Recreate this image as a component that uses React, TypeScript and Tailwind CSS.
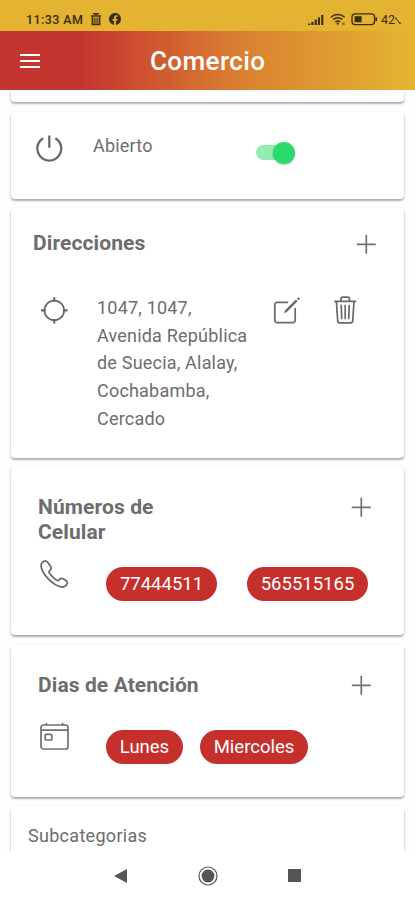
import type { ReactNode } from "react";

const addressLines = [
  "1047, 1047,",
  "Avenida República",
  "de Suecia, Alalay,",
  "Cochabamba,",
  "Cercado",
];

function Card({ className, children }: { className: string; children?: ReactNode }) {
  return (
    <section
      className={`mx-[11px] shrink-0 bg-white shadow-[0_2px_2px_rgba(0,0,0,0.24),0_1px_3px_rgba(0,0,0,0.16)] ${className}`}
    >
      {children}
    </section>
  );
}

function PlusIcon() {
  return (
    <button type="button" aria-label="Agregar" className="size-5 shrink-0">
      <svg viewBox="0 0 20 20" className="size-5" fill="none" stroke="#707070" strokeWidth="1.7">
        <path d="M10.3 .8v19M.8 10.3h19" />
      </svg>
    </button>
  );
}

function Chip({ label, className }: { label: string; className: string }) {
  return (
    <span
      className={`flex shrink-0 items-center justify-center rounded-full bg-[#c5302d] text-[18.5px] leading-none text-white ${className}`}
    >
      {label}
    </span>
  );
}

function StatusBar() {
  return (
    <div className="flex h-[31px] shrink-0 items-start bg-[#e4b331] pt-[13px] pl-[26px] text-[#3b2c0b]">
      <span className="w-[58px] text-[12.5px] leading-[14px] font-medium tracking-[0.4px] whitespace-nowrap">
        11:33 AM
      </span>
      <svg viewBox="0 0 12 14" className="ml-[6px] h-[13px] w-3" fill="none" stroke="currentColor">
        <path d="M.5 3.2h11M4 2V1h4v1" strokeWidth="1.8" />
        <path d="M2.2 4v8.2h7.6V4" strokeWidth="1.8" />
        <path d="M4.8 5v6M7.2 5v6" strokeWidth="1.3" />
      </svg>
      <svg viewBox="0 0 12 12" className="ml-[7px] size-3" fill="currentColor">
        <path d="M12 6a6 6 0 1 0-7 5.9V7.8H3.5V6H5V4.6c0-1.5.9-2.4 2.3-2.4l1.3.1v1.5h-.8c-.7 0-.9.4-.9.9V6h1.6l-.2 1.8H6.9v4.1A6 6 0 0 0 12 6z" />
      </svg>
      <svg viewBox="0 0 17 12" className="mt-[1px] ml-[187px] h-3 w-[17px]" fill="currentColor">
        <path d="M0 9.5h2.2V11H0zM3.3 8h2.2v3H3.3zM6.6 5.8h2.2V11H6.6zM9.9 3.4H12V11H9.9zM13.2 1h2.1v10h-2.1z" />
      </svg>
      <svg viewBox="0 0 17 13" className="ml-[5px] h-[13px] w-[17px]" fill="none" stroke="currentColor">
        <path d="M1 4.2a10 10 0 0 1 13.6 0M3.2 6.5a7 7 0 0 1 9.2 0M5.4 8.8a4 4 0 0 1 4.8 0" strokeWidth="1.5" />
        <circle cx="7.8" cy="10.6" r=".7" fill="currentColor" />
        <path d="M12.5 9.5l2 2.5m0-2.5l-2 2.5" strokeWidth=".7" />
      </svg>
      <svg viewBox="0 0 27 13" className="ml-1 h-[13px] w-[27px]" fill="none" stroke="currentColor">
        <rect x="1" y=".8" width="22.5" height="10.8" rx="3" strokeWidth="1.3" />
        <rect x="3.6" y="3.2" width="7" height="6" fill="currentColor" stroke="none" />
        <path d="M25.2 4.2v4" strokeWidth="1.6" />
      </svg>
      <span className="ml-[3px] text-[12.5px] leading-[14px]">42</span>
      <svg viewBox="0 0 6 9" className="mt-[3px] h-[9px] w-[6px]" fill="none" stroke="currentColor" strokeWidth="1">
        <path d="M.8 2.3l4.4 5.4M.8 1.5v1.8M5 6v2" />
      </svg>
    </div>
  );
}

export default function App() {
  return (
    <div className="flex h-[900px] w-[415px] flex-col overflow-hidden bg-white font-[Roboto,sans-serif] text-[#6d6d6d]">
      <StatusBar />

      <header className="flex h-[59px] shrink-0 items-center bg-[linear-gradient(90deg,#c5352f_0%,#c5352f_20%,#d97d31_56%,#e4b331_98%)] pl-5 text-white">
        <svg viewBox="0 0 20 14" className="h-[14px] w-5" fill="none" stroke="currentColor" strokeWidth="2">
          <path d="M0 1h20M0 7h20M0 13h20" />
        </svg>
        <h1 className="ml-[110px] text-[26px] leading-[30px] font-medium tracking-[0.4px]">Comercio</h1>
      </header>

      <main className="flex min-h-0 flex-1 flex-col overflow-hidden bg-[#fefefe]">
        <Card className="h-[12px] rounded-b-[4px]" />

        <Card className="mt-[10px] flex h-[87px] rounded-[4px] pl-[25px]">
          <svg
            viewBox="0 0 27 27"
            className="mt-[23px] size-[27px] shrink-0"
            fill="none"
            stroke="#656565"
            strokeWidth="2.2"
            strokeLinecap="butt"
          >
            <path d="M13.3 .4v12.4M7.2 3.2A12 12 0 1 0 19.4 3.2" />
          </svg>
          <p className="mt-[22px] ml-[30px] w-[163px] text-[18px] leading-6 tracking-[0.2px]">Abierto</p>
          <button type="button" role="switch" aria-checked="true" className="relative mt-[30px] h-[22px] w-[39px]">
            <span className="absolute top-[3px] left-0 h-[15px] w-[36px] rounded-full bg-[#91edb2]" />
            <span className="absolute top-0 right-0 size-[22px] rounded-full bg-[#2adb6b] shadow-[0_1px_2px_rgba(0,0,0,0.25)]" />
          </button>
        </Card>

        <Card className="mt-[9px] h-[250px] rounded-[4px]">
          <div className="flex items-center justify-between pt-[23px] pr-[28px] pl-[22px]">
            <h2 className="text-[21px] leading-[25px] font-bold tracking-[0.1px]">Direcciones</h2>
            <span className="mt-[1px] flex">
              <PlusIcon />
            </span>
          </div>
          <div className="mt-[38px] flex items-start pl-[29px]">
            <svg viewBox="0 0 28 28" className="mt-[2px] size-7 shrink-0" fill="none" stroke="#686868">
              <circle cx="14.3" cy="14.4" r="9.8" strokeWidth="1.7" />
              <path d="M14.3 1.2v4.6M14.3 23v4.6M1 14.4h4.7M22.9 14.4h4.7" strokeWidth="2.1" />
            </svg>
            <p className="ml-[29px] w-[176px] text-[18px] leading-[27.7px] tracking-[0.2px]">
              {addressLines.map((line) => (
                <span key={line} className="block whitespace-nowrap">
                  {line}
                </span>
              ))}
            </p>
            <svg viewBox="0 0 28 28" className="mt-[3px] h-7 w-7 shrink-0" fill="none" stroke="#686868">
              <path
                d="M15.2 5.3H4.2A2.4 2.4 0 0 0 1.8 7.7v15.6a2.4 2.4 0 0 0 2.4 2.4h15.6a2.4 2.4 0 0 0 2.4-2.4V11"
                strokeWidth="1.7"
              />
              <path d="M11.1 16.2l1-2.9L22.9 2.5l1.7 1.7-10.8 10.9zM23.9 1.6l1.2-1.2c.6-.3 2.1 1 1.7 1.7l-1.2 1.2z" fill="#686868" stroke="none" />
            </svg>
            <svg viewBox="0 0 24 28" className="mt-[2px] ml-8 h-7 w-6 shrink-0" fill="none" stroke="#686868" strokeWidth="1.7">
              <path d="M1.2 5.4h22M8 5V3c0-1.2.7-1.9 1.9-1.9h4.6c1.2 0 1.9.7 1.9 1.9v2" />
              <path d="M3.4 5.4l1.3 19.5c.1 1.3.9 2 2.1 2h10.8c1.2 0 2-.7 2.1-2L21 5.4" />
              <path d="M8.2 8.8l.5 14.5M12.2 8.8v14.5M16.2 8.8l-.5 14.5" />
            </svg>
          </div>
        </Card>

        <Card className="mt-[9px] h-[168px] rounded-[4px]">
          <div className="flex items-start justify-between pt-[28px] pr-[33px] pl-[27px]">
            <h2 className="w-[150px] text-[21px] leading-[25px] font-bold tracking-[0.1px]">
              Números de
              <br />
              Celular
            </h2>
            <span className="mt-[2px] flex">
              <PlusIcon />
            </span>
          </div>
          <div className="mt-[15px] flex items-start pl-[29px]">
            <svg viewBox="0 0 28 28" className="size-7 shrink-0" fill="none" stroke="#686868" strokeWidth="1.7">
              <path d="M3.9 1.3C2 2.3.9 3.9 1.1 6.3c.5 4.2 3.2 8.4 7.2 12.5 4.1 4.1 8.4 7.2 12.7 8.1 2.6.5 4.7-.8 5.9-2.9.7-1.3.4-2.4-.7-3.2l-3-2c-1.3-.8-2.4-.7-3.4.3l-1.2 1.2c-.5.5-1.1.5-1.7.1-1.4-.9-2.8-2.1-4.2-3.5s-2.6-2.8-3.5-4.2c-.4-.6-.4-1.2.1-1.7l1.1-1.2c1-1 1-2.1.2-3.4L8.3 3.1C7.2 1.3 5.6.5 3.9 1.3z" />
            </svg>
            <Chip label="77444511" className="mt-[7px] ml-[38px] h-[34px] w-[111px]" />
            <Chip label="565515165" className="mt-[7px] ml-[30px] h-[34px] w-[121px]" />
          </div>
        </Card>

        <Card className="mt-[10px] h-[152px] rounded-[4px]">
          <div className="flex items-start justify-between pt-[28px] pr-[33px] pl-[27px]">
            <h2 className="text-[21px] leading-[25px] font-bold tracking-[0.1px]">Dias de Atención</h2>
            <span className="mt-[2px] flex">
              <PlusIcon />
            </span>
          </div>
          <div className="mt-[23px] flex items-start pl-[29px]">
            <svg viewBox="0 0 29 28" className="mt-[1px] h-7 w-[29px] shrink-0" fill="none" stroke="#707070" strokeWidth="1.7">
              <rect x="1" y="3" width="27" height="24" rx="2.5" />
              <path d="M1 8.2h27M6.4 1v2.2M22.6 1v2.2" />
              <rect x="5.2" y="12.4" width="6.6" height="5.6" rx=".8" />
            </svg>
            <Chip label="Lunes" className="mt-[9px] ml-[37px] h-[34px] w-[77px]" />
            <Chip label="Miercoles" className="mt-[9px] ml-[17px] h-[34px] w-[108px]" />
          </div>
        </Card>

        <Card className="mt-[10px] h-[60px] rounded-t-[4px] pt-[17px] pl-[17px]">
          <p className="text-[18px] leading-6 tracking-[0.3px]">Subcategorias</p>
        </Card>
      </main>

      <nav className="flex h-[49px] shrink-0 items-center bg-white pl-[114px] text-[#555]">
        <svg viewBox="0 0 13 14" className="h-[14px] w-[13px]" fill="currentColor">
          <path d="M0 7L13 0v14z" />
        </svg>
        <svg viewBox="0 0 20 20" className="ml-[71px] size-5" fill="none" stroke="currentColor">
          <circle cx="10" cy="10" r="9" strokeWidth="1.2" />
          <circle cx="10" cy="10" r="6.4" fill="currentColor" stroke="none" />
        </svg>
        <span className="ml-[70px] size-[13px] bg-current" />
      </nav>
    </div>
  );
}
